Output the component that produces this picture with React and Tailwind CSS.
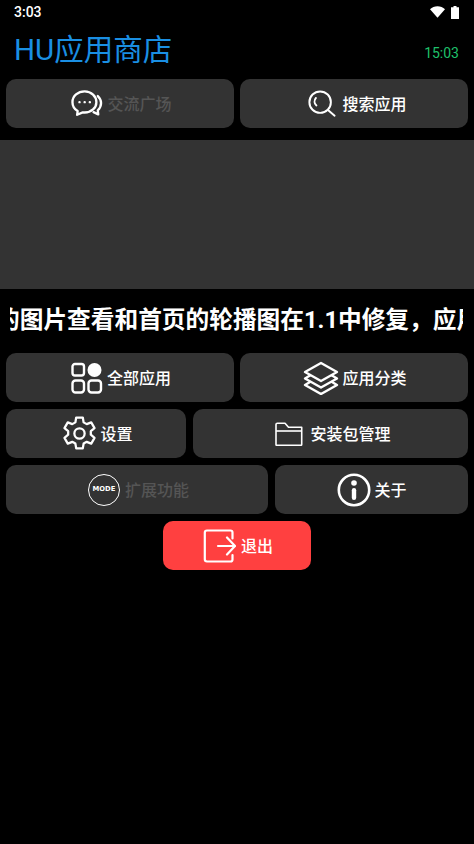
import React from 'react';

const ChatIcon = () => (
  <svg width="34" height="30" viewBox="0 0 35 32" fill="none" stroke="white" strokeWidth="2.500" strokeLinejoin="round" strokeLinecap="round" className="mr-[3px]">
    <path d="M15 2.500C7.800 2.500 2 7.500 2 14c0 4 2.200 7.400 5.500 9.500L7 27.500l6-2.500c.7.100 1.300.100 2 .100 7.200 0 12.500-5 12.500-11.100S22.200 2.500 15 2.500Z" />
    <path d="M29 7.500c2.200 2 3.500 4.500 3.500 7.500 0 3-1.300 5.800-3.500 7.700l.5 4.300-5-2.300" />
    <circle cx="9.500" cy="14" r="0.700" fill="white" strokeWidth="1.200" />
    <circle cx="15" cy="14" r="0.700" fill="white" strokeWidth="1.200" />
    <circle cx="20.500" cy="14" r="0.700" fill="white" strokeWidth="1.200" />
  </svg>
);

const SearchIcon = () => (
  <svg width="28" height="28" viewBox="0 0 30 30" fill="none" stroke="white" strokeWidth="2.100" strokeLinecap="round" className="mr-[6px]">
    <circle cx="13" cy="13" r="11.500" />
    <path d="M8.500 8.500c-2 2.500-2 6 .5 8" />
    <path d="M22 22l6.500 5.500" />
  </svg>
);

const GridIcon = () => (
  <svg width="32" height="32" viewBox="0 0 32 32" fill="none" stroke="white" strokeWidth="2.400" className="mr-[4px]">
    <rect x="1.500" y="2" width="11.500" height="11.500" rx="2.500" />
    <circle cx="23.500" cy="8" r="7" fill="white" stroke="none" />
    <rect x="1.500" y="18.500" width="11.500" height="12" rx="3" />
    <rect x="17.500" y="18.500" width="12.500" height="12" rx="3" />
  </svg>
);

const LayersIcon = () => (
  <svg width="36" height="34" viewBox="0 0 36 34" fill="none" stroke="white" strokeWidth="2.400" strokeLinejoin="round" strokeLinecap="round" className="mr-[3px]">
    <path d="M18 2 34 11 18 20 2 11Z" />
    <path d="M7 14.500 2 17.500l16 9 16-9-5-3" />
    <path d="M7 21 2 24l16 9 16-9-5-3" />
  </svg>
);

const GearIcon = () => (
  <svg width="33" height="35" viewBox="0 0 32 34" fill="none" stroke="white" strokeWidth="2.200" strokeLinejoin="round" className="mr-[4px]">
    <path d="M12.800 1.500h6.400l.8 4.700 3 1.700 4.400-1.700 3.200 5.600-3.600 3v3.400l3.600 3-3.200 5.600-4.400-1.700-3 1.700-.8 4.700h-6.400l-.8-4.700-3-1.700-4.400 1.700-3.200-5.600 3.600-3v-3.400l-3.600-3 3.200-5.600 4.400 1.700 3-1.700Z" />
    <circle cx="16" cy="17" r="5" />
  </svg>
);

const FolderIcon = () => (
  <svg width="28" height="24" viewBox="0 0 28 24" fill="none" stroke="white" strokeWidth="1.600" strokeLinejoin="round" className="mr-[7px]">
    <path d="M1 22.500V2.500c0-.8.500-1.300 1.300-1.300h7.700l3.500 4h13.200v17.300c0 .5-.4.800-.8.800H1.800c-.5 0-.8-.3-.8-.8Z" />
    <path d="M1 9h26" />
  </svg>
);

const ModeIcon = () => (
  <div className="w-[32px] h-[32px] shrink-0 rounded-full border-[1.500px] border-white flex items-center justify-center mr-[5px]">
    <span className="font-['DejaVu_Sans'] text-[6.800px] font-bold text-white leading-none">MODE</span>
  </div>
);

const InfoIcon = () => (
  <svg width="34" height="34" viewBox="0 0 34 34" fill="none" className="mr-[3px]">
    <circle cx="17" cy="17" r="15.200" stroke="white" strokeWidth="2.600" />
    <circle cx="17" cy="10" r="2.800" fill="white" />
    <rect x="14.800" y="15" width="4.400" height="12" rx="2.200" fill="white" />
  </svg>
);

const ExitIcon = () => (
  <svg width="33" height="34" viewBox="0 0 33 34" fill="none" stroke="white" strokeWidth="2.200" strokeLinecap="round" strokeLinejoin="round" className="mr-[5px]">
    <path d="M29.500 9.500V3.500c0-1-.8-2-2-2H4c-1.300 0-2.200 1-2.200 2.200v26.600c0 1.200 1 2.200 2.200 2.200h23.500c1.200 0 2-1 2-2V26" />
    <path d="M15 17h16.500" />
    <path d="M24 8.500 32 17l-8 8.500" />
  </svg>
);

const MenuButton = ({ icon, label, disabled, className = 'w-[228px] pl-[2px]' }) => (
  <button
    type="button"
    className={`${className} h-[49px] rounded-[10px] bg-[#333333] flex items-center justify-center text-[16px] font-medium ${disabled ? 'text-[#555555]' : 'text-white'}`}
  >
    {icon}
    <span className="pt-[2px]">{label}</span>
  </button>
);

const App = () => {
  return (
    <div
      className="w-[474px] h-[844px] bg-black overflow-hidden flex flex-col"
      style={{ fontFamily: 'Roboto, "Noto Sans CJK SC", sans-serif' }}
    >
      {/* status bar */}
      <div className="h-[24px] px-[14px] flex items-center justify-between text-white">
        <span className="text-[14px] font-medium">3:03</span>
        <div className="flex items-center gap-[6px] pr-[1px]">
          <svg width="15" height="12" viewBox="0 0 15 12" fill="white">
            <path d="M0 3.200C2 1.300 4.600.2 7.500.2S13 1.300 15 3.200L7.500 11.800Z" />
          </svg>
          <svg width="8" height="13" viewBox="0 0 8 13" fill="white">
            <path d="M2.500 0h3v1.300H8V13H0V1.300h2.500Z" />
          </svg>
        </div>
      </div>

      {/* title */}
      <div className="h-[55px] pl-[14px] pr-[15px] flex items-center justify-between">
        <span className="text-[29.500px] leading-none text-[#1a8fe3] pb-[2px]">HU应用商店</span>
        <span className="text-[14px] text-[#1fc16b] pt-[3px]">15:03</span>
      </div>

      <div className="px-[6px] flex gap-[6px]">
        <MenuButton icon={<ChatIcon />} label="交流广场" disabled />
        <MenuButton icon={<SearchIcon />} label="搜索应用" className="w-[228px] pl-[7px]" />
      </div>

      {/* banner */}
      <div className="mt-[12px] h-[149px] bg-[#333333]" />

      {/* scrolling notice */}
      <div className="mx-[10px] w-[453px] h-[64px] overflow-hidden flex items-center">
        <span className="-ml-[14px] whitespace-nowrap text-[23.700px] font-bold text-white">
          的图片查看和首页的轮播图在1.1中修复，应用
        </span>
      </div>

      <div className="px-[6px] flex flex-col gap-[7px]">
        <div className="flex gap-[6px]">
          <MenuButton icon={<GridIcon />} label="全部应用" />
          <MenuButton icon={<LayersIcon />} label="应用分类" />
        </div>
        <div className="flex gap-[7px]">
          <MenuButton icon={<GearIcon />} label="设置" className="w-[180px] pl-[4px]" />
          <MenuButton icon={<FolderIcon />} label="安装包管理" className="w-[275px] pl-[5px]" />
        </div>
        <div className="flex gap-[7px]">
          <MenuButton icon={<ModeIcon />} label="扩展功能" disabled className="w-[262px] pl-[3px]" />
          <MenuButton icon={<InfoIcon />} label="关于" className="w-[193px] pl-[1px]" />
        </div>
        <div className="flex justify-center">
          <button
            type="button"
            className="w-[148px] h-[49px] pl-[2px] rounded-[10px] bg-[#ff4040] flex items-center justify-center text-[16px] font-medium text-white"
          >
            <ExitIcon />
            <span className="pt-[2px]">退出</span>
          </button>
        </div>
      </div>
    </div>
  );
};

export default App;
